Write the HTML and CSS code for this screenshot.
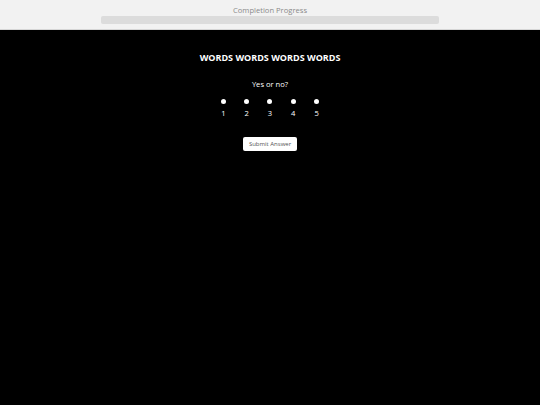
FILE: index.html
```html
<!DOCTYPE html>
<html>
<head>
<meta charset="utf-8">
<link rel="stylesheet" href="styles.css">
</head>
<body>
<div class="header">
  <div class="progress-label">Completion Progress</div>
  <div class="progress-bar"></div>
</div>
<div class="main">
  <h1 class="title">WORDS WORDS WORDS WORDS</h1>
  <div class="question">Yes or no?</div>
  <div class="options">
    <label class="option"><span class="dot"></span><span class="num">1</span></label>
    <label class="option"><span class="dot"></span><span class="num">2</span></label>
    <label class="option"><span class="dot"></span><span class="num">3</span></label>
    <label class="option"><span class="dot"></span><span class="num">4</span></label>
    <label class="option"><span class="dot"></span><span class="num">5</span></label>
  </div>
  <button class="submit">Submit Answer</button>
</div>
</body>
</html>
```
FILE: styles.css
```css
html, body {
  margin: 0;
  padding: 0;
  height: 100%;
  background: #000;
  font-family: "Open Sans", sans-serif;
}
.header {
  background: #f2f2f2;
  height: 29px;
  border-bottom: 1px solid #d6d6d6;
  display: flex;
  flex-direction: column;
  align-items: center;
}
.progress-label {
  color: #8a8a8a;
  font-size: 7.6px;
  line-height: 11px;
  margin-top: 5px;
}
.progress-bar {
  width: 338px;
  height: 8px;
  background: #dcdcdc;
  border-radius: 2px;
  margin-top: 0px;
}
.main {
  display: flex;
  flex-direction: column;
  align-items: center;
  color: #fff;
}
.title {
  margin: 21px 0 0;
  font-size: 9px;
  font-weight: 700;
  line-height: 13px;
}
.question {
  margin-top: 15px;
  font-size: 7.6px;
  line-height: 11px;
}
.options {
  display: flex;
  gap: 13px;
  margin-top: 9px;
}
.option {
  width: 10.3px;
  display: flex;
  flex-direction: column;
  align-items: center;
}
.dot {
  width: 5px;
  height: 5px;
  border-radius: 50%;
  background: #fff;
}
.num {
  margin-top: 3.5px;
  font-size: 7.6px;
  line-height: 11px;
}
.submit {
  margin-top: 18px;
  background: #fff;
  border: none;
  border-radius: 2px;
  width: 54px;
  height: 14px;
  padding: 0;
  font-family: "Open Sans", sans-serif;
  font-size: 6px;
  color: #555;
}
```
